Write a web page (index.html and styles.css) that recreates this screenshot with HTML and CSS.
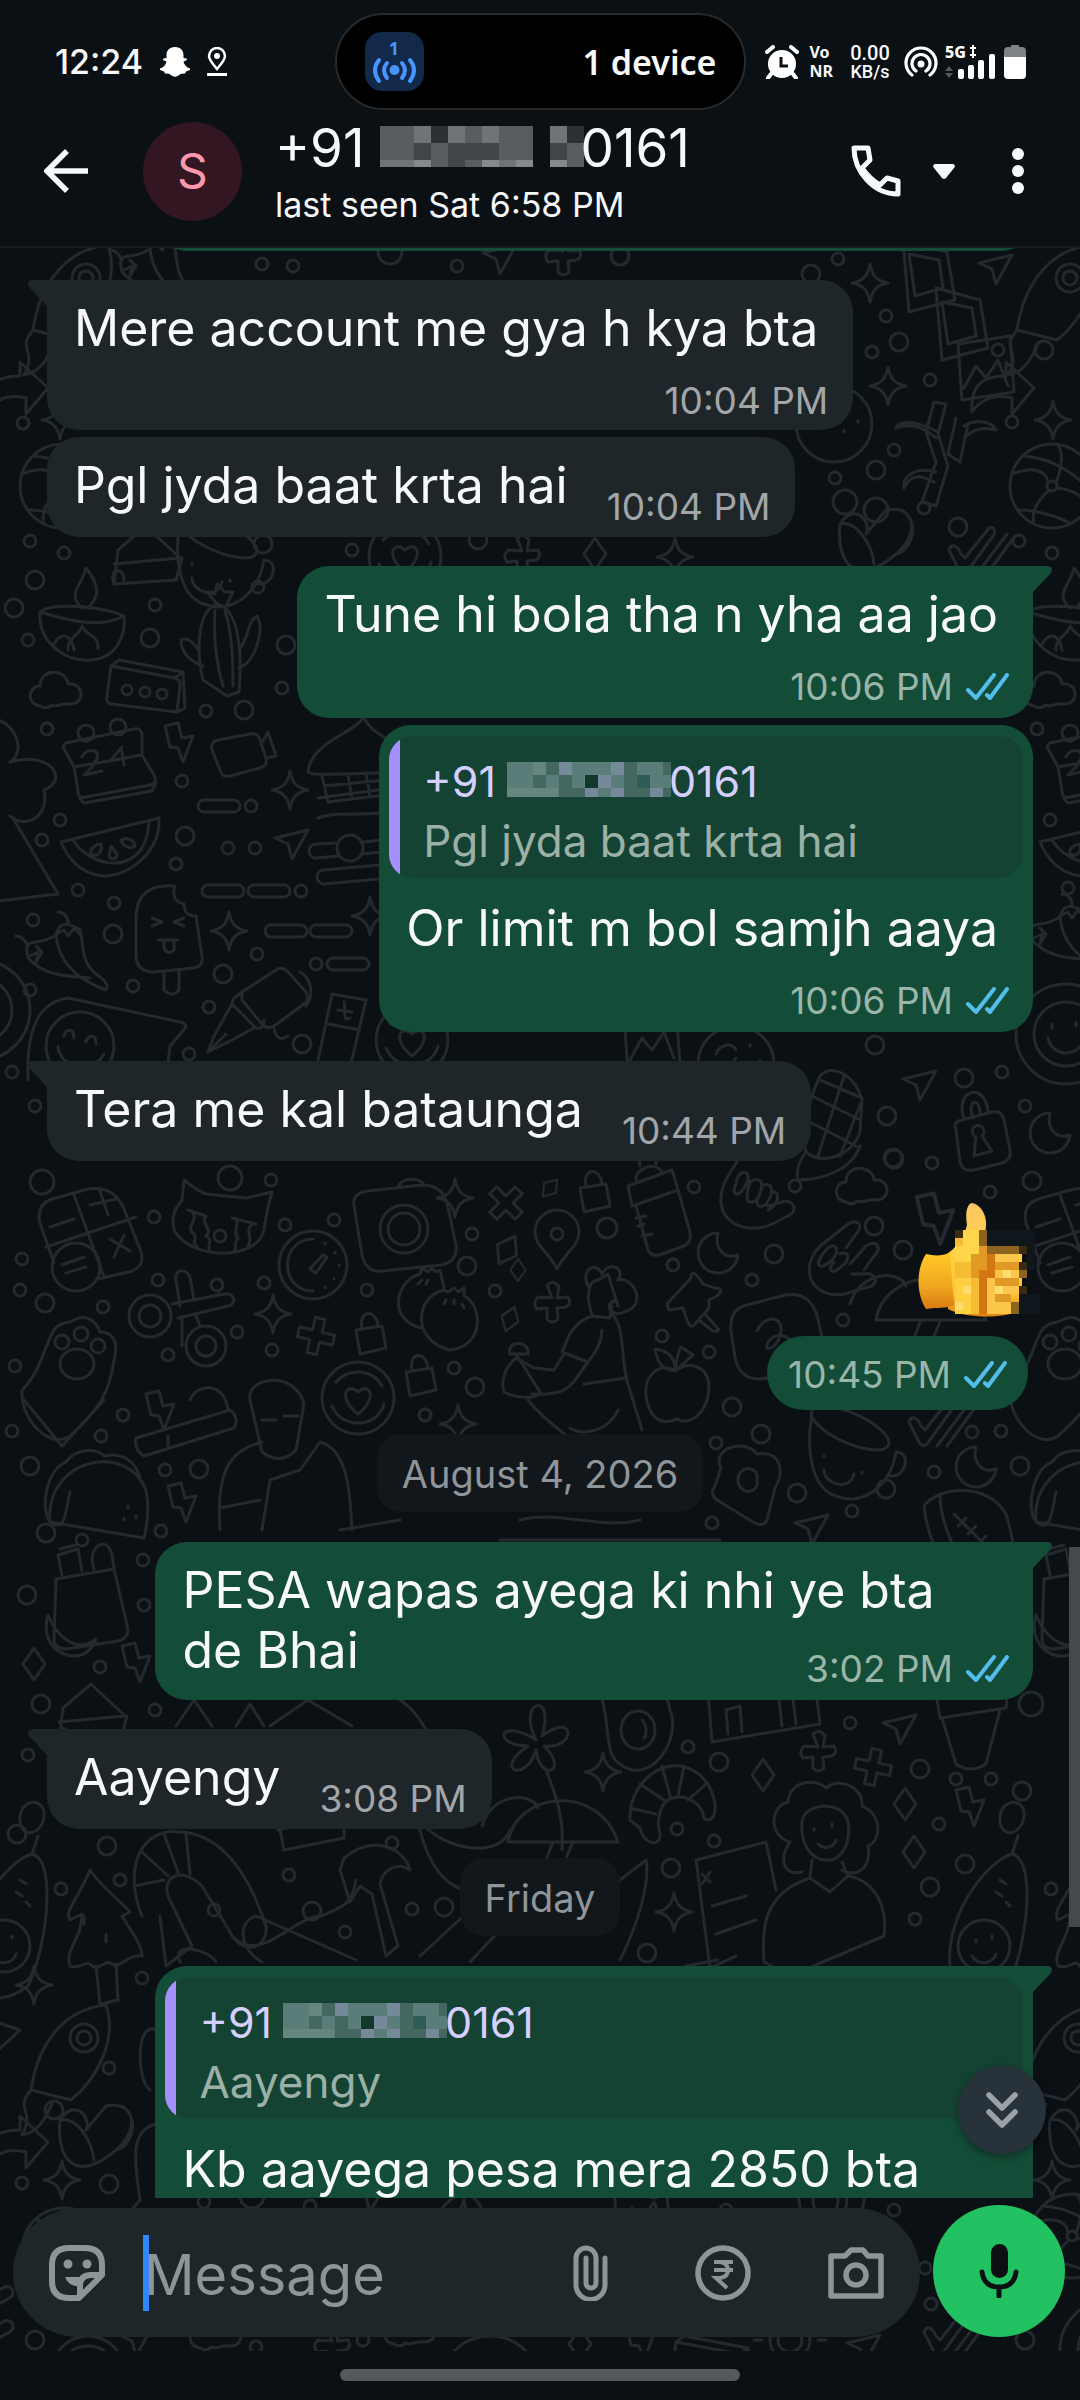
FILE: index.html
```
<!DOCTYPE html>
<html lang="en">
<head>
<meta charset="utf-8">
<meta name="viewport" content="width=device-width, initial-scale=1">
<title>Chat</title>
<link rel="stylesheet" href="styles.css">
</head>
<body>
<svg class="defs" aria-hidden="true">
  <defs>
    <symbol id="ticks" viewBox="0 0 43 28"><path d="M2 17 10 25 28 2M21 22 24 25 41 2" fill="none" stroke="#53bdeb" stroke-width="4" stroke-linecap="round" stroke-linejoin="round"/></symbol>
    <symbol id="mask" viewBox="0 0 164 35">
      <path fill="#5b7d7a" d="M0 0h164v35H0z"/>
      <path fill="#65857f" d="M0 26h51v9H0zM26 0h13v13H26zM77 13h13v13H77z"/>
      <path fill="#75899a" d="M52 0h13v13H52zM104 0h13v13h-13zM91 13h13v13H91zM78 26h13v9H78zM104 26h13v9h-13zM143 26h13v9h-13z"/>
      <path fill="#44685f" d="M39 0h13v13H39zM26 13h13v13H26zM52 13h13v13H52zM117 0h13v13h-13zM117 13h13v13h-13zM52 26h26v9H52zM117 26h26v9h-26zM156 0h8v13h-8zM156 26h8v9h-8z"/>
      <path fill="#2f5d53" d="M130 13h13v13h-13z"/>
      <path fill="#11382d" d="M78 13h13v13H78z"/>
    </symbol>
    <circle id="c1" r="6"/><circle id="c2" r="9"/><circle id="c3" r="12"/>
    <path id="star" d="M0-19C2-7 7-2 18 0 7 2 2 7 0 19-2 7-7 2-18 0-7-2-2-7 0-19z"/>
    <path id="bolt" d="M-14-16-1-19 3-4 14-6 4 20-1 6-9 5z"/>
    <path id="plane" d="M-17-5 16-13 0 16-4 1z"/>
    <path id="dash" d="M-15-6h30a6 6 0 0 1 0 12h-30a6 6 0 0 1 0-12z"/>
    <path id="moon" d="M0-19A20 20 0 1 0 20 3C6 8-4-4 0-19z"/>
    <path id="cross" d="M-5-18h10v13h13v10H5v13H-5V5h-13V-5h13z" stroke-linejoin="round"/>
    <path id="cloud" d="M-16 14C-30 12-28-6-16-6-16-24 10-24 12-8 28-10 30 12 14 12 6 10 2 16-4 13-8 16-12 17-16 14z"/>
    <path id="gem" d="M0-16 11 0 0 16-11 0z"/>
    <g id="lock"><path d="M-14-6 12-10 16 12-10 18zM-8-8C-12-26 6-28 8-10"/></g>
    <g id="padlock"><path d="M-24-10Q-28-18-18-20L12-28Q22-30 24-20L30 10Q32 20 22 23L-6 30Q-18 32-20 22zM-16-21C-26-52 6-58 8-28M-7-22C-14-40 0-44 0-26"/><path d="M2-4a6 6 0 1 0-6 1L-6 16 12 11z"/></g>
    <g id="pin"><path d="M0 29C-9 11-22 6-22-8a22 22 0 0 1 44 0C22 6 9 11 0 29z"/><circle cy="-6" r="6"/></g>
    <g id="rocket"><path d="M-45 30C-40-5-20-50 30-55 42-20 20 20-5 40zM-45 30C-62 50-40 50-54 75-36 72-30 56-24 44"/><circle cx="8" cy="-22" r="14"/><circle cx="8" cy="-22" r="7"/></g>
    <g id="globe"><circle r="42"/><circle r="5"/><path d="M-40-12C-20-20-6-16-4-4M4-3C14-30 8-40 4-42M5 2C26 4 36 16 38 20M-3 4C-20 20-20 30-18 38M-28-30C0-28 30-10 40 10M-34 24C-10 24 14 34 18 38"/></g>
    <g id="photo"><path d="M-22-30 22-18 30 30-16 42zM-16-16 14-10 18 18-10 26z"/></g>
    <g id="scene"><path d="M-26-24 26-32 30 24-22 32zM-20 20-8-2 2 10 14-8 24 18"/><circle cx="14" cy="-18" r="6"/></g>
    <path id="arrow" d="M-28 26C-30-4-14-10 6-10V-24L34 2 12 28V12C-4 8-18 12-28 26z"/>
    <g id="bamboo"><path d="M-8-60-16-30-6 0-20 40-6 44 6 4-4-28 4-58zM14-44 6-8 18 0 26-38M-4-30C-30-44-44-40-46-34-30-40-18-34-6-24M22-36C36-44 50-40 54-32 40-36 32-32 24-26M-6 10C-28 4-40 16-38 26-30 10-20 14-8 20"/></g>
    <g id="diya"><path d="M-42-8C-44 20-20 42 10 40 34 38 44 16 42-4 20-14-30-18-42-8zM-42-8C-10 2 20 8 42-4M0-12C-16-26 0-34 4-52 18-34 18-24 6-12M-14 30C-14 16-4 18 0 6 6 18 16 14 16 28M-28 24C-20 10-10 16-8 30"/></g>
    <g id="cactus"><path d="M-18 34C-26 0-22-36-4-42 16-38 22 0 18 46L6 50zM-18 20C-34 14-40 4-40-6-32-10-28-2-22 4M18 4C28-8 26-24 36-30 44-16 34 16 18 22M-4-42-14-54-6-52-4-62 4-54 12-54 6-42M-6-36C-8-4-4 20 2 40M4-36C12-8 12 20 12 40"/></g>
    <g id="box"><path d="M-34-20 30-8Q36-6 35 0L32 26-34 18Q-40 16-38 10zM-34-20-26-26 38-14 30-8M38-14 40 22 32 26"/><circle cx="-18" cy="4" r="5"/><circle cy="6" r="5"/><circle cx="17" cy="8" r="5"/></g>
    <g id="calendar"><path d="M-44-22Q-48-20-46-16L-36 2-32 26Q-32 34-24 32L40 20Q48 18 44 10L32-10 32-28Q32-38 24-36zM-36 2 32-10M-30 34-26 38 42 26 46 18"/><circle cx="-24" cy="-32" r="8"/><circle cx="8" cy="-38" r="8"/><path d="M-28-8Q-24-16-16-14T-18 2L-26 10-8 6M12-18 0-4 20-8M12-14 14 0"/></g>
    <g id="melon"><path d="M-50-8 48-32C50 0 20 26-8 26-34 24-46 2-50-8zM-38-10C-24 12 6 20 24 6 34-2 38-18 38-29"/><path d="M-20 4C-22-2-14-6-10-6-8 2-14 8-20 4zM-2 6-0-4 6 4C6 10 0 10-2 6zM10-10C18-14 24-8 24-4 18 0 12-4 10-10z"/></g>
    <g id="pop"><path d="M5-50C-20-52-34-42-34-18V22Q-32 36-16 36L24 32Q34 30 32 20L26-20C16-20 14-26 14-32 4-34 2-42 5-50zM-6 36V54Q2 62 9 54V34M-18-18-8-14-18-10M14-18 4-14 14-10M-12 4H8M-6 4V12Q-2 20 4 14V4"/></g>
    <g id="chili"><path d="M-10-14C-8 14 12 32 40 42 44 36 36 30 30 26 14 14 18-6 14-18-4-30-8-20-10-14zM-12-12C-30 0-44-14-38 10-22 28 0 28 24 30M2-24C2-32-2-36-8-36M-38-2C-42-10-46-12-50-12M-10-14-2-18 2-12 8-20 14-14M-36 8-28 4-30 14-24 4-30-2"/></g>
    <g id="video"><path d="M-32-10Q-34-18-26-20L6-26Q14-28 16-20L22-2Q24 6 16 8L-14 16Q-22 18-24 10zM17-16 24-28 32-4 22-2"/></g>
    <g id="hut"><path d="M-50 20C-48-10 0-20 6-36 10-14 60-6 62 20-30 22-46 24-50 20zM-36 24-30 50 50 40 46 22M-40 46 50 34M-10 24-6 46M8 22 12 44M-34 34 48 26M-40 66C-20 58 10 66 40 58"/></g>
    <g id="slider"><path d="M-14-7-34-6a7 7 0 0 0 0 14l22-2M14-8 48-12M12 4 50 0M-26 20 40 14M-26 34 40 28M-26 20a7 7 0 0 0 0 14"/><circle cy="-2" r="13"/></g>
    <g id="marker"><path d="M-10-14 24-36Q30-40 36-34L54-14Q58-6 52-2L22 20Q14 24 10 18L-10-6zM-10-14-18-8Q-22-2-16 2L4 22Q12 24 12 14M-20-2-38 30-44 46-20 34 2 22M-44 46-26 28M48-34C60-28 62-10 54 0M22 22C24 34 30 34 36 30"/></g>
    <g id="tile"><path d="M-10-36 24-30 6 46-26 40zM-14-6 18 0M2-28C4-18 0-8 8-12M-4-20 10-18"/></g>
    <g id="bag"><path d="M-72 40C-74-10-62-38-32-42L80-18Q90-16 82-8L70 6 66 40"/><circle cx="-20" cy="6" r="34"/><path d="M-42 6C-42 26-8 36 4 14M-36-4C-34-12-26-12-26-2M-14 2C-12-6-4-6-4 4"/></g>
    <g id="calc"><path d="M-50-12Q-54-30-38-36L-2-46Q24-50 34-26L50 14Q58 34 34 38L8 44M-50-12-36 28M-16-40 14 42M-44 12 46-18M-40-8-16-16M0-30 26-36M10-44 18-20M20 4 40 16M34 0 24 22"/><circle cx="-14" cy="32" r="24"/><path d="M-28 30-6 22M-24 38-4 32"/></g>
    <g id="cat"><path d="M-36-46C-26-38-20-34-14-32L26-28 52-34C46-14 46-8 44 4 38 34-28 36-46 4-50-16-40-22-38-26zM-32-16-14-10M-28-14C-20-6-36 0-26 8-22 16-30 14-22 22M-14-10C-20-2-6 4-14 10-6 14-14 18-10 26M12-8 36-2M16-8C20 0 12 6 18 12 12 18 18 20 14 26M32-2C24 6 34 12 28 20"/><circle cy="10" r="6"/></g>
    <g id="timer"><circle r="34"/><path d="M0-26C-34-26-34 26 0 26M-3 4 10-10 14-8 3 8zM12-22v1M22-13v1M26 0v1M21 13v1M12 22v1"/></g>
    <g id="camera"><path d="M-44-30Q-46-42-30-44L24-50Q46-50 50-28L58 10Q60 26 44 30L-16 36Q-32 38-36 20zM0-48C4-58 22-58 26-50"/><circle cx="6" cy="-6" r="24"/><circle cx="6" cy="-6" r="16"/></g>
    <g id="scissors"><path d="M-4-40C-6-52 8-52 10-42L14-20M-4-40 0-14M-2-2 48-14C58-16 54-28 44-26L-8-16M2-2 2 26M16-4 20 6"/><circle cx="-30" cy="-4" r="21"/><circle cx="-30" cy="-4" r="11"/><circle cx="26" cy="26" r="20"/><circle cx="26" cy="26" r="10"/></g>
    <g id="paw"><path d="M-48 30C-28 10-26-14-16-30-8-40 0-36 4-40 20-48 28-34 30-28 46-28 48-14 44 0 40 30 30 50 0 76-20 90-50 60-48 30z"/><circle cx="-8" cy="-18" r="7"/><circle cx="11" cy="-26" r="7"/><circle cx="28" cy="-14" r="7"/><ellipse cx="7" cy="4" rx="17" ry="15"/></g>
    <g id="disk"><circle r="36"/><path d="M-22-16C-10-30 14-30 24-12M-26 8C-16 32 20 30 26 6M0 16C-22-2-10-16 0-6 10-16 22-2 0 16z"/></g>
    <g id="bottle"><path d="M-30-20 14-36 20-16-26 0zM-22-26C-24-36-4-46 4-34M-18-40C-22-58 0-58-2-42M-22 0-10 44Q-6 52 4 48L26 40Q34 36 32 26L20-16M-22 12-12 10M-20 20-14 18M-16 30-6 28"/></g>
    <g id="shaka"><path d="M20-56 0-24C-20 10 4 36 40 26L60 16C72 10 64-2 54 2L40 6M8-16C10-32 22-30 20-20 12 0 2-4 8-16zM22-18C34-26 38-14 28 0 20 6 16 0 22-18M34-14C46-20 46-6 38 4 30 10 26 4 32-6M44-8C52-10 52 4 40 10"/></g>
    <g id="horn"><path d="M18-36C28-42 34-34 26-26L16-12M18-36-10-14C-34 12-14 40 14 34L42 26C50 20 42 12 34 14L22 14M-4-10C4-20 12-10 2 0-10 12-18 6-4-10zM10-6C20-10 20 0 12 6 2 16-4 10 4 2M20 4 36-14C48-22 52-10 44-4L34 10"/></g>
    <g id="tack"><path d="M-28 4-4-22C-4-34 6-20 8-16L20-12Q30-12 22-4L14 0 14 8 0 24Q-4 30-8 20L-12 8-26 10zM10 14 24 30Q20 34 14 28L4 20"/></g>
    <g id="buns"><path d="M-16-26C-40-20-50 20-14 28M-16-26-14-32-8-28-4-32 0-28 4-30 8-12M-18-16-14-20M-10-16-8-20"/><path d="M8-10C-20-4-26 40 14 50 50 46 46 4 28-4L28-12 22-8 18-12 12-8zM8 4 10 0M18 4 18 0M28 8 26 4"/></g>
    <g id="aster"><path d="M0-5-5-18Q2-24 7-16L5-5 16-6Q20 0 14 4L5 5 6 16Q0 22-5 16L-5 5-15 6Q-20 0-14-6z"/></g>
    <g id="girl"><path d="M-2-40C-14-38-10-24-12-22L-8-4 10-2 12-14M-12-34C-20-50-4-60 2-46 8-60 26-52 18-40 34-44 48-14 24-8 12-2 2-16 16-20M-2-40 8-46 18-14M-8-4C-32 4-34 26-38 32L-12 42C-2 30 2 20 2 10M-36 34-46 50-66 48M12-6C26 8 20 40 28 64L42 110M-12 42C-30 66-30 76-68 74M-66 48-84 38C-94 46-100 60-96 72-80 80-60 78-60 72L-84 34M-90 34C-94 20-70 20-72 34zM26 58-16 64M18 90C8 112-18 116-30 108M-72 80C-56 100-40 110-30 118"/></g>
    <g id="apple"><path d="M0-14C-14-24-34-10-28 16-22 40-8 38 2 34 14 42 34 28 34 0 32-20 14-24 0-14zM0-14C-16-16-18-26-20-36-6-34 0-28 0-14 2-26 2-32 6-38L18-30Z"/></g>
    <g id="die"><path d="M-44-6Q-46-28-28-32L10-42Q34-46 42-22L50 14Q52 34 32 36L-16 42Q-36 42-40 20zM-18-6C-10-24 8-20 6-6 4 10-10 16-8 8-4-4 10-4 16 4"/></g>
    <g id="cup"><path d="M-34-38C-40-6-36 36-10 44 16 54 44 36 50 0M50 0C66 0 60 26 44 24M-22 4v1M16 20v1M-22 18C-22 32 4 40 8 22"/><ellipse cx="4" cy="-24" rx="42" ry="15" transform="rotate(24 4 -24)"/></g>
    <g id="check"><path d="M-26-2C-24-8-18-8-14 2L-10 6 14-24C18-26 22-22 18-16L-8 20Q-12 24-16 18zM2 22 32-18M12 22 40-16"/></g>
    <g id="taco"><path d="M-46 22C-52-40 30-60 50-10 54 10 50 30 48 38zM-46 22C-56 8-50-30-30-38-20-52 0-52 8-44 24-48 40-40 44-22M-46 22C-30 34-30 8-26-8M32 6v2M40 16v2M28 18v2"/></g>
    <g id="ball"><path d="M-42-18C-30-36 20-44 40-10 46 10 48 24 50 36M-42-18C-40 4-32 24-22 40M-26-30C-26-4-14 20-4 40M-12-10 20 22M-8 2 0-6M2 10 10 2M12 20 20 12"/></g>
    <g id="toast"><path d="M-24-14C-34-34 0-44 12-28 36-32 40-10 30 6L22 38Q18 46 8 40L-28 18Q-36 12-30 4zM12-8C2-22-14-6-4 6 4 14 14 6 12 0z"/></g>
    <g id="tote"><path d="M-30-16 28-26 42 34Q42 44 32 46L-20 54Q-32 54-32 44zM-24-20-28-40-8-46-4-24M-26-46-10-50M8-26C0-50 22-60 26-40L28-26M-38 20C-50 60 0 76 10 44-10 60-30 40-38 20z"/></g>
    <g id="note"><path d="M-32-10-4-34 30-2-36 4M-32-10-36 24 26 20 32-2M-36 24C-42 8-26 6-26 20"/></g>
    <g id="flower"><path d="M0 0C-20-40 20-50 6-4 40-30 40 10 8 6 34 30 4 44 0 10-10 44-44 30-8 6-44 6-38-24 0 0zM10 30C22 60 28 80 26 110"/></g>
    <g id="egg"><path d="M-34-38C-30-66 30-60 36-20 46 4 26 44-2 40-36 30-20 2-34-38z"/><ellipse cx="4" cy="0" rx="17" ry="19"/><path d="M8-10C14-4 12 6 10 8"/></g>
    <g id="house"><path d="M-56-40-50 36 58 18 50-50M-34 28-36 4-22 0-20 26M20 20 16-14 30-16 34 18M-40-36-40-22-30-24-30-38M-16-40-16-26-4-28-6-42M12-44 12-30 26-32 24-46"/></g>
    <g id="pot"><path d="M-34-30 38-40 36-16-30-6zM-28-6-14 40Q0 50 16 40L30-14M-30-30C-30-46 20-54 34-40"/></g>
    <g id="croissant"><path d="M-38 20C-40-24 10-56 40-16 54 10 44 26 36 18 34 4 20-6 4-2-8 2-12 20-8 34-8 50-26 42-28 28zM-38 8-12 14M-28-16-4 0M-6-34 2-4M16-34 10-4M38-16 20 0"/></g>
    <g id="parasol"><path d="M-54 20C-46-30 36-40 56 20zM-10 22-24 60M-80 4C-70-30-30-30-24-14M10 22-6 60"/></g>
    <g id="bloom"><path d="M-34 6C-56 0-54-30-36-34-34-56-8-58 2-48 16-60 40-48 38-30 58-22 58 4 44 10 48 34 30 42 18 34M-34 6C-46 24-40 40-22 36M-22-14C-20-34 20-36 24-14 28 14 12 26 2 24-14 24-24 6-22-14zM-10-8v2M8-12v2M-6 8C0 14 10 12 12 4M-12 24-14 42 6 56 24 40 18 26M-14 42C-70 60-60 110-60 126L-34 140 60 100C64 70 50 44 24 40"/></g>
    <g id="map"><path d="M-30-30 40-48M-30-30-16 78 10 66M40-48 50 0M-24-16-16-8M-16-18-24-6M-14 16 20 6M-10 44 30 30M-40 76-8 70"/></g>
    <g id="avocado"><path d="M-36 60C-50 0 0-60 24-66 50-60 38 30 20 66-4 84-28 82-36 60z"/><circle cx="-4" cy="26" r="26"/><path d="M-16 36C-8 48 6 42 8 34M-12 20v2M4 16v2M8-28 14-24M12-40 18-36M18-18 22-14M24-66 30-84M34-96C44-120 16-126 12-104 10-88 24-80 34-96z"/></g>
    <g id="tree"><path d="M-16-50C-28-20-42-10-36 0L-24-6C-24 20-42 30-36 46-24 50-20 38-14 46-8 52 0 38 6 44 14 50 20 34 36 36 36 24 24 10 16-4L24-8C14-20-2-30-16-50zM-10 46-6 84 12 80 10 44M-22-4v8M0 14v8"/></g>
    <g id="shrimp"><path d="M-30 40C-50-10-30-50 10-44 60-40 84 20 94 50 96 74 70 80 58 56L30 10C10-10-10 0-4 20L20 70-6 90-12 40M-38 10-8 4M-30-24-4 0M-8-42 6-4M14-42 18-2M60 60C90 90 120 40 150 40 170 30 180 30 184 4"/></g>
    <g id="hammer"><path d="M-30-32C0-56 30-42 36-20 22-30 8-18 6-6L24 56 12 66-2 4-14-4-24 12-34-20z"/></g>
    <g id="mic-heart"><path d="M-26-20C-10-44 6-20 0-10L20-34C50-40 54-10 30 10-10 44-30 20-26-20zM-26-20C-10-24 6 0 8 20M36-34C56-20 44 8 30 10"/></g>
    <g id="smile"><circle r="50"/><circle r="32"/><path d="M-18 4C-14 24 14 24 18 4M-14-10v4M10-12v4"/></g>
    <g id="pine"><path d="M-12-20C-26 10-30 40-26 56-10 70 20 60 28 36L30 4C24-20 0-34-12-20zM-26 24 24 50M-20 0 28 24M-12-16 30 2M-14 60 12-20M8 60 30 4M-26 56C-34 66-36 74-34 84-10 84 20 74 28 50"/></g>
    <g id="cookie"><circle r="38"/><path d="M-20-10C-16-20-4-22 0-14M-24 0C-20 8-6 4 0-6M14-20v2M24-4v2M10 6v2"/></g>
    <g id="sun"><circle r="12"/><circle r="20"/><path d="M-36 0h8M28 0h8M-26-22l6 6M20-16l6-6M0-36v8"/></g>
  </defs>
</svg>

<div class="phone">
  <div class="status">
    <div class="status-left">
      <time>12:24</time>
      <svg width="30" height="30" viewBox="0 0 30 30" fill="#fff"><path d="M15 0c6 0 8.500 4 8.500 8v3l3 .5c.8.500.5 1.500-.5 2l-2.500 1c.5 3 3 6 6.500 7v1.500l-4 1.500-1 2-4 .2c-2 1.500-4 3-6 3s-4-1.500-6-3L5 26.500l-1-2L0 23v-1.500c3.500-1 6-4 6.500-7l-2.500-1c-1-.5-1.300-1.500-.5-2l3-.5V8c0-4 2.500-8 8.500-8z"/></svg>
      <svg width="20" height="30" viewBox="0 0 20 30"><path d="M10 22C6 17 2 13 2 9a8 8 0 0 1 16 0c0 4-4 8-8 13z" fill="none" stroke="#fff" stroke-width="2.500"/><circle cx="10" cy="9" r="3" fill="#fff"/><path d="M0 26h20v3H0z" fill="#fff"/></svg>
    </div>
    <div class="island">
      <svg width="59" height="59" viewBox="0 0 59 59"><rect width="59" height="59" rx="17" fill="#12294a"/><text x="29" y="23" text-anchor="middle" class="island-count">1</text><circle cx="29.500" cy="38" r="5" fill="#4795ff"/><g fill="none" stroke="#4795ff" stroke-width="4" stroke-linecap="round"><path d="M22 31q-6 7 0 15M37 31q6 7 0 15M14 28q-8 10 0 21M45 28q8 10 0 21"/></g></svg>
      <span>1 device</span>
    </div>
    <div class="status-right">
      <svg width="34" height="34" viewBox="0 0 34 34"><circle cx="17" cy="19" r="14" fill="#fff"/><path d="M2 7 8 2M26 2l6 5M6 29l-3 4M28 29l3 4" stroke="#fff" stroke-width="4" stroke-linecap="round"/><path d="M16 12v9h7" fill="none" stroke="#0b1014" stroke-width="3"/></svg>
      <span class="vonr">Vo<br>NR</span>
      <span class="rate">0.00<small>KB/s</small></span>
      <svg width="34" height="34" viewBox="0 0 34 34"><circle cx="17" cy="19" r="3.500" fill="#fff"/><g fill="none" stroke="#fff" stroke-width="3.200" stroke-linecap="round"><path d="M12 26a9 9 0 1 1 10 0M8 30a15 15 0 1 1 18 0"/></g></svg>
      <svg width="52" height="50" viewBox="0 -8 52 50"><text x="0" y="13" class="net">5G</text><path d="M28 0v13M25 3h6M25 10h6" stroke="#fff" stroke-width="2"/><g fill="#fff"><rect x="13" y="24" width="6" height="10" rx="2"/><rect x="23" y="20" width="6" height="14" rx="2"/><rect x="33" y="15" width="6" height="19" rx="2"/><rect x="44" y="9" width="6" height="25" rx="2"/></g><path d="M0 26l4-5 4 5zM0 28l4 5 4-5z" fill="#55595c"/></svg>
      <svg width="22" height="34" viewBox="0 0 22 34"><path d="M7 0h8v2h3q4 0 4 4v7H0V6q0-4 4-4h3z" fill="#808386"/><path d="M0 12h22v18q0 4-4 4H4q-4 0-4-4z" fill="#fff"/></svg>
    </div>
  </div>

  <header class="bar">
    <button class="icon-btn back" aria-label="Back"><svg width="44" height="44" viewBox="0 0 44 44"><path d="M23 2 3 22l20 20M3 22h41" fill="none" stroke="#f7f8fa" stroke-width="5.500"/></svg></button>
    <span class="avatar">S</span>
    <div class="who">
      <h1>+91<svg width="204" height="41" viewBox="0 0 204 41">
        <path fill="#595c60" d="M0 0h153v41H0zM170 0h34v41h-34z"/>
        <path fill="#707377" d="M34 0h17v17H34zM68 0h17v17H68zM102 0h17v17h-17zM170 0h17v17h-17zM0 34h34v7H0zM119 34h17v7h-17z"/>
        <path fill="#414549" d="M34 17h17v17H34zM68 17h51v17H68zM68 34h17v7H68zM170 17h17v17h-17z"/>
        <path fill="#2b3035" d="M51 0h17v17H51zM187 0h17v17h-17z"/>
        <path fill="#85898c" d="M34 34h17v7H34zM102 34h17v7h-17zM136 34h17v7h-17zM170 34h17v7h-17z"/>
      </svg>0161</h1>
      <p>last seen Sat 6:58 PM</p>
    </div>
    <button class="icon-btn call" aria-label="Call"><svg width="50" height="52" viewBox="0 0 50 52"><path d="M3 3h14l2 12-8 8C17 32 22 36 29 40l7-7 11 3v13C22 49 3 26 3 3z" fill="none" stroke="#f7f8fa" stroke-width="5" stroke-linejoin="round"/></svg>
    <svg width="22" height="15" viewBox="0 0 22 15"><path d="M2 0h18q3 1 1 4L13 14q-2 2-4 0L1 4q-2-3 1-4z" fill="#f7f8fa"/></svg></button>
    <button class="icon-btn" aria-label="More options"><svg width="12" height="46" viewBox="0 0 12 46" fill="#f7f8fa"><circle cx="6" cy="6" r="6"/><circle cx="6" cy="23" r="6"/><circle cx="6" cy="40" r="6"/></svg></button>
  </header>

  <main class="chat">
    <svg class="wallpaper" viewBox="0 248 1080 2103" preserveAspectRatio="xMidYMin slice" aria-hidden="true">
      <use href="#rocket" x="78" y="300"/><use href="#rocket" x="1062" y="300"/><use href="#photo" x="925" y="270"/><use href="#photo" x="958" y="318"/><use href="#scene" x="984" y="368"/><use href="#star" x="870" y="283"/><use href="#star" x="888" y="386"/><use href="#plane" x="996" y="268"/><use href="#arrow" x="1000" y="386"/><use href="#arrow" x="14" y="386"/>
      <use href="#bamboo" x="942" y="462"/><use href="#globe" x="1052" y="486"/><use href="#globe" x="62" y="486"/><use href="#star" x="1053" y="420"/><use href="#star" x="60" y="420"/><use href="#cookie" x="834" y="424"/><use href="#mic-heart" x="866" y="544"/><use href="#c3" x="845" y="502"/><use href="#c3" x="876" y="510"/><use href="#star" x="675" y="557"/><use href="#disk" x="405" y="556"/><use href="#c1" x="352" y="550"/><use href="#c2" x="478" y="540"/><use href="#aster" x="522" y="556"/><use href="#gem" x="595" y="554"/><use href="#check" x="975" y="552"/>
      <use href="#c3" x="390" y="252"/><use href="#plane" x="500" y="258"/><use href="#aster" x="563" y="256"/><use href="#c2" x="620" y="256"/><use href="#c1" x="457" y="266"/><use href="#c1" x="262" y="264"/><use href="#c1" x="293" y="266"/><use href="#chili" x="160" y="262"/><use href="#c1" x="838" y="259"/><use href="#c2" x="811" y="274"/><use href="#c1" x="886" y="316"/><use href="#c1" x="872" y="352"/><use href="#c2" x="899" y="342"/><use href="#c1" x="930" y="380"/><use href="#c2" x="1044" y="350"/><use href="#c1" x="1012" y="422"/><use href="#c1" x="894" y="450"/><use href="#c2" x="876" y="470"/><use href="#c1" x="835" y="478"/><use href="#c1" x="924" y="508"/><use href="#c2" x="958" y="527"/><use href="#c1" x="1019" y="541"/><use href="#c1" x="1052" y="553"/><use href="#c1" x="23" y="423"/>
      <use href="#diya" x="82" y="620"/><use href="#diya" x="1070" y="620"/><use href="#cactus" x="221" y="646"/><use href="#box" x="145" y="686"/><use href="#cloud" x="56" y="692"/><use href="#cloud" x="1050" y="692"/><use href="#cup" x="214" y="560"/><use href="#note" x="150" y="560"/><use href="#c1" x="30" y="541"/><use href="#c1" x="64" y="553"/><use href="#c2" x="35" y="580"/><use href="#c2" x="14" y="608"/><use href="#c1" x="155" y="605"/><use href="#c2" x="150" y="638"/><use href="#c1" x="28" y="640"/><use href="#c2" x="263" y="544"/><use href="#c1" x="258" y="587"/><use href="#c2" x="286" y="645"/><use href="#c1" x="282" y="688"/><use href="#c1" x="206" y="711"/><use href="#c2" x="244" y="710"/>
      <use href="#calendar" x="110" y="765"/><use href="#bolt" x="179" y="742"/><use href="#video" x="244" y="760"/><use href="#star" x="290" y="790"/><use href="#dash" x="219" y="806"/><use href="#c1" x="251" y="806"/><use href="#plane" x="292" y="843"/><use href="#melon" x="111" y="850"/><use href="#c2" x="185" y="836"/><use href="#c1" x="228" y="848"/><use href="#c1" x="255" y="848"/><use href="#hut" x="358" y="752"/><use href="#slider" x="350" y="850"/><use href="#pop" x="170" y="936"/><use href="#dash" x="223" y="891"/><use href="#dash" x="269" y="891"/><use href="#c1" x="301" y="891"/><use href="#star" x="229" y="931"/><use href="#dash" x="286" y="931"/><use href="#dash" x="331" y="931"/><use href="#c1" x="316" y="964"/><use href="#dash" x="348" y="964"/><use href="#star" x="370" y="916"/><use href="#chili" x="66" y="948"/><use href="#c2" x="113" y="934"/><use href="#c1" x="114" y="903"/><use href="#c1" x="78" y="890"/><use href="#c1" x="33" y="920"/><use href="#c1" x="30" y="990"/><use href="#c1" x="133" y="986"/><use href="#c2" x="223" y="974"/><use href="#c1" x="257" y="954"/><use href="#c1" x="209" y="1007"/><use href="#c1" x="189" y="1054"/><use href="#c2" x="302" y="1044"/>
      <use href="#c1" x="47" y="729"/><use href="#c1" x="60" y="820"/><use href="#c1" x="42" y="840"/><use href="#c1" x="182" y="781"/><use href="#c1" x="176" y="864"/><path d="M-20 720C10 710 30 750 10 762 50 750 70 780 44 790 50 816 26 830 10 816M14 820 58 894-10 902"/><use href="#marker" x="252" y="1006"/><use href="#tile" x="342" y="1030"/><use href="#bag" x="100" y="1040"/><use href="#smile" x="-20" y="1010"/><use href="#disk" x="412" y="1040"/><use href="#cookie" x="736" y="1064"/><use href="#scene" x="650" y="1040"/><use href="#c2" x="875" y="1045"/><use href="#plane" x="920" y="1084"/><use href="#pine" x="832" y="1096"/><use href="#padlock" x="980" y="1140"/><use href="#moon" x="1050" y="1132"/><use href="#smile" x="1066" y="1034"/><use href="#chili" x="1070" y="930"/><use href="#melon" x="1090" y="850"/><use href="#calendar" x="1094" y="765"/><use href="#c1" x="1050" y="820"/><use href="#c1" x="1068" y="888"/><use href="#c2" x="964" y="1078"/><use href="#c1" x="1002" y="1072"/><use href="#c2" x="887" y="1116"/><use href="#c2" x="893" y="1158"/><use href="#c1" x="932" y="1163"/><use href="#c1" x="1025" y="1106"/><use href="#c1" x="1037" y="729"/>
      <use href="#calc" x="90" y="1235"/><use href="#cat" x="220" y="1226"/><use href="#timer" x="313" y="1265"/><use href="#camera" x="398" y="1235"/><use href="#scissors" x="180" y="1320"/><use href="#star" x="273" y="1314"/><use href="#cross" transform="translate(316 1336) rotate(14)"/><use href="#lock" x="370" y="1336"/><use href="#paw" x="70" y="1360"/><use href="#disk" x="358" y="1398"/><use href="#c3" x="42" y="1182"/><use href="#c1" x="35" y="1106"/><use href="#c1" x="12" y="1072"/><use href="#c3" x="230" y="1178"/><use href="#c1" x="271" y="1180"/><use href="#c1" x="154" y="1217"/><use href="#c1" x="285" y="1225"/><use href="#c1" x="334" y="1220"/><use href="#c1" x="158" y="1280"/><use href="#c1" x="217" y="1285"/><use href="#c1" x="264" y="1283"/><use href="#c2" x="45" y="1303"/><use href="#c1" x="103" y="1307"/><use href="#c1" x="237" y="1332"/><use href="#c1" x="272" y="1350"/><use href="#c1" x="168" y="1355"/><use href="#c1" x="22" y="1259"/><use href="#c1" x="20" y="1290"/><use href="#c1" x="15" y="1366"/><use href="#c1" x="367" y="1290"/>
      <use href="#star" x="455" y="1198"/><use href="#cross" transform="translate(506 1203) rotate(45)"/><use href="#gem" transform="translate(550 1188) rotate(40) scale(.7)"/><use href="#lock" x="594" y="1194"/><use href="#bottle" x="658" y="1206"/><use href="#pin" x="557" y="1240"/><circle cx="607" cy="1228" r="10"/><use href="#shaka" x="728" y="1200"/><use href="#moon" x="718" y="1252"/><use href="#cloud" x="862" y="1188"/><use href="#bolt" transform="translate(935 1218) scale(1.300)"/><use href="#horn" x="830" y="1260"/><use href="#tack" x="695" y="1300"/><use href="#buns" x="436" y="1300"/><use href="#aster" x="552" y="1303"/><use href="#girl" x="600" y="1320"/><use href="#apple" x="675" y="1385"/><use href="#die" x="775" y="1337"/><use href="#lock" x="420" y="1378"/><use href="#star" x="458" y="1424"/><use href="#gem" transform="translate(507 1250) rotate(30)"/><use href="#gem" transform="translate(518 1270) scale(.7)"/><use href="#gem" transform="translate(510 1319) rotate(20) scale(.8)"/><use href="#c2" x="467" y="1266"/><use href="#c1" x="472" y="1234"/><use href="#c1" x="495" y="1291"/><use href="#c1" x="454" y="1368"/><use href="#c2" x="475" y="1387"/><use href="#c1" x="425" y="1415"/><use href="#c2" x="774" y="1254"/><use href="#c1" x="673" y="1265"/><use href="#c1" x="752" y="1280"/><use href="#c1" x="694" y="1187"/><use href="#c1" x="795" y="1186"/><use href="#c2" x="894" y="1159"/><use href="#c2" x="874" y="1226"/><use href="#c2" x="903" y="1250"/><use href="#c1" x="662" y="1336"/><use href="#c1" x="709" y="1352"/><use href="#c1" x="843" y="1320"/><use href="#c2" x="732" y="1407"/><use href="#c2" x="761" y="1434"/><use href="#c1" x="716" y="1443"/>
      <use href="#parasol" x="930" y="1300"/><use href="#c2" x="1032" y="1181"/><use href="#c1" x="990" y="1192"/><use href="#calc" x="1076" y="1235"/><use href="#paw" x="1058" y="1360"/><use href="#cup" x="846" y="1452"/><use href="#check" x="935" y="1424"/><use href="#moon" x="976" y="1466"/><use href="#ball" x="966" y="1524"/><use href="#taco" x="96" y="1500"/><use href="#taco" x="1082" y="1500"/><use href="#bolt" x="182" y="1502"/><use href="#toast" x="745" y="1482"/><path d="M136 1438 230 1410Q240 1418 234 1428L144 1456Q134 1450 136 1438zM168 1446v-10M190 1400C196 1384 224 1380 228 1410M250 1400C246 1376 296 1370 304 1404L296 1450Q280 1466 262 1452zM262 1420h14M284 1416h14M220 1530C216 1470 230 1450 262 1442M262 1530 270 1480 300 1470 320 1442C350 1450 350 1500 352 1530M220 1508 260 1500M340 1530 400 1520"/><path d="M24 1400 62 1446 104 1400M520 1520C560 1510 600 1530 640 1520M500 1540h220"/>
      <use href="#bolt" x="160" y="1410"/><use href="#c1" x="12" y="1431"/><use href="#c1" x="123" y="1415"/><use href="#c1" x="101" y="1436"/><use href="#c2" x="30" y="1466"/><use href="#c1" x="165" y="1470"/><use href="#c2" x="199" y="1469"/><use href="#c2" x="46" y="1533"/><use href="#c1" x="82" y="1540"/><use href="#c1" x="161" y="1531"/><use href="#c1" x="425" y="1415"/><use href="#c1" x="972" y="1432"/><use href="#c1" x="1001" y="1431"/><use href="#c2" x="1020" y="1466"/><use href="#c1" x="934" y="1472"/><use href="#c2" x="797" y="1493"/><use href="#c2" x="886" y="1489"/><use href="#c1" x="852" y="1511"/><use href="#c1" x="712" y="1523"/><use href="#plane" x="812" y="1528"/>
      <use href="#tote" x="86" y="1595"/><use href="#tote" x="1074" y="1595"/><use href="#bolt" x="136" y="1662"/><use href="#note" x="95" y="1718"/><use href="#c1" x="143" y="1560"/><use href="#c2" x="27" y="1595"/><use href="#c1" x="144" y="1605"/><use href="#gem" x="34" y="1664"/><use href="#c1" x="100" y="1667"/><use href="#c1" x="155" y="1710"/><use href="#c2" x="41" y="1704"/><use href="#c1" x="28" y="1755"/><use href="#c3" x="1031" y="1704"/><use href="#flower" x="536" y="1740"/><use href="#egg" x="634" y="1730"/><use href="#house" x="762" y="1706"/><use href="#plane" x="900" y="1728"/><use href="#pot" x="970" y="1724"/><use href="#star" x="603" y="1772"/><use href="#croissant" x="668" y="1800"/><use href="#gem" x="763" y="1775"/><use href="#aster" x="818" y="1752"/><use href="#cross" transform="translate(873 1767) rotate(12)"/><use href="#bloom" x="824" y="1836"/><use href="#bolt" x="970" y="1806"/><use href="#parasol" x="562" y="1822"/><use href="#gem" x="905" y="1804"/><use href="#c1" x="850" y="1723"/><use href="#c1" x="688" y="1747"/><use href="#c2" x="719" y="1762"/><use href="#c2" x="920" y="1769"/><use href="#c1" x="956" y="1779"/><use href="#c1" x="991" y="1779"/><use href="#c2" x="1022" y="1791"/><use href="#c1" x="714" y="1841"/><use href="#c1" x="677" y="1829"/><use href="#c1" x="939" y="1824"/><use href="#gem" x="914" y="1852"/><path d="M176 1726 194 1700 212 1726M236 1726 250 1704 264 1726M270 1726 308 1700 352 1726M400 1700C430 1720 440 1760 436 1800"/>
      <use href="#avocado" x="988" y="1920"/><use href="#avocado" x="8" y="1920"/><use href="#tree" x="106" y="1920"/><use href="#tree" x="1094" y="1920"/><use href="#shrimp" x="172" y="1876"/><use href="#hammer" x="374" y="1890"/><use href="#map" x="726" y="1890"/><use href="#star" x="674" y="1912"/><use href="#star" x="34" y="1985"/><use href="#c2" x="107" y="1846"/><use href="#c2" x="17" y="1834"/><use href="#c1" x="61" y="1889"/><use href="#c1" x="120" y="1880"/><use href="#c1" x="214" y="1910"/><use href="#c1" x="289" y="1875"/><use href="#c2" x="312" y="1911"/><use href="#c1" x="345" y="1932"/><use href="#c1" x="412" y="1909"/><use href="#c2" x="444" y="1907"/><use href="#c1" x="392" y="1843"/><use href="#c2" x="671" y="1868"/><use href="#c2" x="647" y="1953"/><use href="#c2" x="930" y="1887"/><use href="#c1" x="915" y="1919"/><use href="#c2" x="965" y="1864"/><use href="#c1" x="1051" y="1889"/><use href="#c1" x="142" y="1978"/><path d="M278 1830 344 1816M280 1830 284 1850 344 1838V1816M356 1960 256 1916C236 1922 240 1950 262 1962M420 1956 470 1910 500 1930 470 1962M420 1830C430 1870 450 1890 470 1890M620 1960C640 1920 650 1880 646 1860L620 1880M420 1820C440 1850 500 1860 510 1830M180 1962C170 1940 210 1950 216 1962"/>
      <use href="#rocket" x="76" y="2060"/><use href="#rocket" x="1070" y="2060"/><use href="#c1" x="109" y="2068"/><use href="#c2" x="54" y="2110"/><use href="#mic-heart" x="86" y="2140"/><use href="#mic-heart" x="1076" y="2140"/><use href="#arrow" x="14" y="2140"/><use href="#star" x="62" y="2180"/><use href="#star" x="1052" y="2180"/><use href="#c2" x="109" y="2184"/><use href="#c1" x="22" y="2183"/><path d="M156 2030C136 2020 136 2080 150 2090M156 2124C130 2130 134 2160 140 2200L130 2212M-10 2020 20 2030-2 2050"/>
      <use href="#globe" x="64" y="2250"/><use href="#globe" x="1072" y="2236"/><use href="#c1" x="204" y="2202"/><use href="#c3" x="252" y="2196"/><use href="#c1" x="310" y="2206"/><use href="#flower" x="464" y="2190"/><use href="#plane" x="370" y="2196"/><use href="#c1" x="726" y="2210"/><use href="#scene" x="640" y="2210"/><use href="#egg" x="826" y="2200"/><use href="#c1" x="894" y="2210"/><use href="#c1" x="925" y="2268"/><use href="#c1" x="931" y="2304"/><use href="#dash" transform="translate(-6 2300) rotate(-30)"/><use href="#dash" transform="translate(-6 2334) rotate(-30)"/><use href="#c2" x="35" y="2340"/><use href="#disk" x="88" y="2372"/><use href="#plane" x="136" y="2340"/><use href="#cloud" x="216" y="2334"/><use href="#c1" x="256" y="2347"/><use href="#aster" x="332" y="2346"/><use href="#c1" x="363" y="2340"/><use href="#cloud" x="410" y="2330"/><use href="#smile" x="490" y="2386"/><use href="#sun" x="790" y="2340"/><use href="#box" x="710" y="2362"/><use href="#plane" x="864" y="2348"/><use href="#check" x="950" y="2334"/><use href="#c2" x="1025" y="2340"/><use href="#smile" x="1110" y="2350"/><use href="#gem" x="580" y="2344"/><use href="#bolt" x="640" y="2340"/>
    </svg>

    <section class="list" aria-label="Messages">
      <div class="msg out scrolled"></div>

      <div class="msg in tail first"><p>Mere account me gya h kya bta</p><div class="meta below">10:04 PM</div></div>
      <div class="msg in inline next"><p>Pgl jyda baat krta hai</p><div class="meta">10:04 PM</div></div>

      <div class="msg out tail first"><p>Tune hi bola tha n yha aa jao</p><div class="meta below">10:06 PM<svg class="ticks"><use href="#ticks"/></svg></div></div>
      <div class="msg out quoted next">
        <blockquote><cite>+91<svg class="mask"><use href="#mask"/></svg>0161</cite><span>Pgl jyda baat krta hai</span></blockquote>
        <p>Or limit m bol samjh aaya</p><div class="meta below">10:06 PM<svg class="ticks"><use href="#ticks"/></svg></div>
      </div>

      <div class="msg in inline tail first"><p>Tera me kal bataunga</p><div class="meta">10:44 PM</div></div>

      <div class="sticker">
        <svg class="thumb" width="110" height="114" viewBox="0 0 110 114" role="img" aria-label="Thumbs up">
          <defs><linearGradient id="skin" x1="0" y1="0" x2="0" y2="1"><stop offset="0" stop-color="#fbc667"/><stop offset=".45" stop-color="#ffd23f"/><stop offset=".8" stop-color="#fdc335"/><stop offset="1" stop-color="#dd8215"/></linearGradient><linearGradient id="cuff" x1="0" y1="0" x2="0" y2="1"><stop offset="0" stop-color="#ffc928"/><stop offset=".6" stop-color="#f0a51f"/><stop offset="1" stop-color="#d97b12"/></linearGradient></defs>
          <path d="M27 52C38 46 46 34 49 22 47 10 49 1 54 0c8 1 15 12 14 22l-2 24 38 2v58c-14 10-56 10-74 0z" fill="url(#skin)"/>
          <path d="M8 51C16 53 24 53 32 50L36 102C28 106 20 104 8 106-2 90-2 66 8 51z" fill="url(#cuff)"/>
          <g shape-rendering="crispEdges">
            <path fill="#10171c" d="M69 27h48v16H69zM109 43h8v24h-8zM109 91h13v20h-13zM101 91h8v20h-8z"/>
            <path fill="#3b2a12" d="M37 27h8v8h-8zM101 43h8v8h-8zM101 59h8v8h-8zM101 83h8v8h-8z"/>
            <path fill="#8d6320" d="M61 27h8v16h-8zM69 43h8v8h-8zM77 43h24v8H77zM93 99h8v12h-8zM101 67h8v8h-8z"/>
            <path fill="#ffd54a" d="M45 27h16v16H45zM37 43h24v16H37z"/>
            <path fill="#f6bd34" d="M37 35h8v8h-8zM37 59h16v16H37zM53 59h8v52h-8z"/>
            <path fill="#ffcf42" d="M37 75h16v36H37z"/>
            <path fill="#e09a25" d="M53 51h8v24h-8zM61 43h8v24h-8zM77 59h24v8H77zM77 75h24v8H77zM77 91h16v8H77z"/>
            <path fill="#d47712" d="M61 67h8v44h-8zM69 51h8v24h-8z"/>
            <path fill="#fbc64a" d="M77 51h24v8H77zM69 75h8v36h-8zM77 67h24v8H77zM77 83h24v8H77zM77 99h16v12H77z"/>
            <path fill="#ffdc6e" d="M85 67h8v8h-8zM45 83h8v8h-8zM37 99h8v8h-8zM77 83h8v8h-8z"/>
          </g>
        </svg>
        <div class="meta pill">10:45 PM<svg class="ticks"><use href="#ticks"/></svg></div>
      </div>

      <div class="day after-sticker">August 4, 2026</div>

      <div class="msg out tail first wide"><p class="wrapped">PESA wapas ayega ki nhi ye bta de Bhai<span class="meta corner">3:02 PM<svg class="ticks"><use href="#ticks"/></svg></span></p></div>
      <div class="msg in inline tail first"><p>Aayengy</p><div class="meta">3:08 PM</div></div>

      <div class="day">Friday</div>

      <div class="msg out tail quoted first wide last">
        <blockquote><cite>+91<svg class="mask"><use href="#mask"/></svg>0161</cite><span>Aayengy</span></blockquote>
        <p>Kb aayega pesa mera 2850 bta</p>
      </div>
      <span class="scrollbar"></span>
      <button class="jump" aria-label="Scroll to latest"><svg width="32" height="36" viewBox="0 0 32 36"><path d="M3 3l13 13L29 3M3 20l13 13 13-13" fill="none" stroke="#9ba1a5" stroke-width="5.500" stroke-linecap="round" stroke-linejoin="round"/></svg></button>
    </section>

    <form class="composer">
      <div class="field">
        <button type="button" class="icon-btn" aria-label="Stickers"><svg width="56" height="56" viewBox="0 0 56 56"><path d="M53 30V20Q53 3 36 3H20Q3 3 3 20v16q0 17 17 17h10zM53 30H42Q31 30 31 41v12" fill="none" stroke="#8d9598" stroke-width="6" stroke-linejoin="round"/><circle cx="19" cy="19" r="4.500" fill="#8d9598"/><circle cx="38" cy="19" r="4.500" fill="#8d9598"/><path d="M16 32h18v9q-14 2-18-9z" fill="#8d9598"/></svg></button>
        <span class="caret"></span>
        <input type="text" placeholder="Message" aria-label="Message">
        <button type="button" class="icon-btn" aria-label="Attach"><svg width="56" height="56" viewBox="0 0 56 56"><path d="M43 13v27a14 14 0 0 1-29 0V13a10 10 0 0 1 20 0v25a5 5 0 0 1-10 0V13" fill="none" stroke="#8d9598" stroke-width="5" stroke-linecap="round"/></svg></button>
        <button type="button" class="icon-btn" aria-label="Payment"><svg width="56" height="56" viewBox="0 0 56 56" fill="none" stroke="#8d9598"><circle cx="28" cy="28" r="25" stroke-width="5.500"/><path d="M19 17h19M19 25h19M20 17h5q8 1 8 8t-8 8h-4l11 10" stroke-width="4"/></svg></button>
        <button type="button" class="icon-btn" aria-label="Camera"><svg width="56" height="52" viewBox="0 0 56 52" fill="none" stroke="#8d9598" stroke-width="5.500" stroke-linejoin="round"><path d="M3 9h14l6-6h12l5 6h13v40H3z"/><circle cx="28" cy="28" r="10"/></svg></button>
      </div>
      <button type="button" class="mic" aria-label="Record voice message"><svg width="40" height="54" viewBox="0 0 40 54"><rect x="12" y="0" width="17" height="34" rx="8.500" fill="#0b1014"/><path d="M3 28q2 15 17 15t17-15M20 43v9" fill="none" stroke="#0b1014" stroke-width="5" stroke-linecap="round"/></svg></button>
    </form>
  </main>
  <div class="navbar"><span></span></div>
</div>
</body>
</html>
```
FILE: styles.css
```
* { box-sizing: border-box; margin: 0; padding: 0; }

body {
  background: #0b1014;
  color: #f7f8fa;
  font: 400 50px/60px Inter, Roboto, sans-serif;
}

button { border: 0; background: none; color: inherit; font: inherit; }
svg { display: block; flex: none; }
.defs { position: absolute; width: 0; height: 0; }

.phone { display: flex; flex-direction: column; height: 100vh; }

/* Status bar */
.status {
  display: grid;
  grid-template-columns: 1fr 411px 1fr;
  align-items: center;
  flex: none;
  height: 110px;
  padding-top: 13px;
}
.status-left { display: flex; align-items: center; gap: 17px; padding-left: 55px; font: 500 34px/40px Inter, sans-serif; }
.island {
  display: flex;
  align-items: center;
  justify-content: space-between;
  height: 97px;
  padding: 0 27px 0 28px;
  border: 2px solid #28292a;
  border-radius: 49px;
  background: #000;
  font: 600 34px/40px "Noto Sans", sans-serif;
}
.island-count { font: 700 18px "Noto Sans", sans-serif; fill: #4795ff; }
.status-right { display: flex; align-items: center; padding-left: 19px; }
.vonr { margin-left: 11px; width: 24px; font: 700 16px/19px "Noto Sans", sans-serif; }
.rate { margin: 0 13px 0 16px; width: 41px; text-align: center; font: 500 20px/20px Roboto, sans-serif; }
.rate small { display: block; font-size: 18px; line-height: 18px; }
.status-right svg + svg { margin-left: 7px; }
.net { font: 800 16px "Noto Sans", sans-serif; fill: #fff; }

/* Conversation header */
.bar {
  display: flex;
  align-items: center;
  flex: none;
  height: 138px;
  padding: 0 56px 14px 44px;
  border-bottom: 2px solid #171c20;
}
.icon-btn { display: flex; align-items: center; justify-content: center; flex: none; }
.avatar {
  display: grid;
  place-items: center;
  flex: none;
  width: 99px;
  height: 99px;
  margin: 0 33px 0 55px;
  border-radius: 50%;
  background: #321622;
  color: #fa99ac;
  font-size: 48px;
}
.who { flex: 1; min-width: 0; }
.who h1 { display: flex; align-items: baseline; font-size: 53px; font-weight: 400; line-height: 66px; }
.who h1 svg { margin: 0 -3px 0 15px; }
.who p { padding-top: 2px; font-size: 34px; line-height: 44px; }
.call { gap: 32px; margin-right: 57px; }

/* Messages */
.chat { position: relative; display: flex; flex-direction: column; flex: 1; min-height: 0; overflow: hidden; }
.wallpaper {
  position: absolute;
  inset: 0;
  width: 100%;
  height: 100%;
  fill: none;
  stroke: #23292d;
  stroke-width: 3;
  stroke-linecap: round;
  stroke-linejoin: round;
}
.list {
  position: relative;
  display: flex;
  flex-direction: column;
  flex: 1;
  min-height: 0;
  overflow: hidden;
  padding: 0 47px;
}
.msg {
  position: relative;
  display: flex;
  flex-direction: column;
  flex: none;
  max-width: 89%;
  padding: 18px 25px 7px 27px;
  border-radius: 32px;
}
.in { align-self: flex-start; background: #1f262a; }
.out { align-self: flex-end; padding: 18px 24px 9px 27px; background: #144d37; }
.in p { padding-right: 10px; }
.out p { padding-right: 11px; }
.msg.inline { flex-direction: row; align-items: flex-end; padding-bottom: 8px; }
.msg.inline p { padding-right: 39px; margin-bottom: 14px; }
.first { margin-top: 29px; }
.next { margin-top: 7px; }
.wide { width: 89%; }
.scrolled { width: 89%; height: 80px; margin-top: -77px; }

.tail::before {
  content: "";
  position: absolute;
  top: 0;
  width: 20px;
  height: 26px;
  background: inherit;
}
.in.tail { border-top-left-radius: 0; }
.out.tail { border-top-right-radius: 0; }
.in.tail::before { left: -19px; clip-path: path("M5 0H20V26H19L1 7Q-2 0 5 0Z"); }
.out.tail::before { right: -19px; clip-path: path("M15 0H0V26H1L19 7Q22 0 15 0Z"); }

.meta {
  display: flex;
  align-items: center;
  align-self: flex-end;
  gap: 13px;
  color: #a2a6a8;
  font-size: 37px;
  line-height: 44px;
  white-space: nowrap;
}
.out .meta, .pill { color: #9ab5a9; }
.below { margin-top: 21px; }
.wrapped { display: flow-root; }
.corner { float: right; margin: 27px -11px 0 0; }
.ticks { width: 43px; height: 28px; }

.msg.quoted { padding-top: 11px; }
.quoted blockquote {
  display: flex;
  flex-direction: column;
  margin: 0 -14px 20px -17px;
  padding: 15px 30px 7px 34px;
  border-radius: 24px;
  background: linear-gradient(90deg, #a78fff 11px, #154333 11px);
  color: #9bb0a7;
  font-size: 44px;
}
.quoted cite { display: flex; align-items: baseline; color: #d6cfff; font-size: 43px; font-style: normal; }
.mask { width: 164px; height: 35px; margin: 0 -2px 0 11px; }
.msg.last { padding-bottom: 90px; }

.sticker { display: flex; flex-direction: column; align-items: flex-end; margin: 42px 5px 0 0; }
.thumb { overflow: visible; }
.pill { margin-top: 19px; padding: 17px 21px 13px; border-radius: 37px; background: #144d37; }

.day {
  align-self: center;
  margin-top: 29px;
  padding: 17px 25px 14px;
  border-radius: 24px;
  background: #11171b;
  color: #8f9598;
  font-size: 38px;
  line-height: 47px;
}
.after-sticker { margin-top: 24px; }
.day + .first { margin-top: 30px; }

.scrollbar { position: absolute; top: 66.600%; right: 0; width: 11px; height: 19.500%; background: #45494c; }
.jump {
  position: absolute;
  right: 34px;
  bottom: 44px;
  display: grid;
  place-items: center;
  width: 88px;
  height: 88px;
  border-radius: 50%;
  background: #28323a;
  box-shadow: 0 3px 8px rgba(0, 0, 0, .4);
}

/* Composer */
.composer { position: relative; display: flex; align-items: flex-end; gap: 13px; flex: none; padding: 7px 15px 14px 13px; }
.field {
  display: flex;
  align-items: center;
  flex: 1;
  min-width: 0;
  height: 129px;
  padding: 0 36px;
  border-radius: 65px;
  background: #1f262a;
}
.caret { flex: none; width: 6px; height: 76px; margin-left: 38px; background: #3086fb; }
.field input {
  flex: 1;
  min-width: 0;
  height: 76px;
  padding-top: 4px;
  margin-left: -5px;
  border: 0;
  outline: 0;
  background: none;
  color: #f7f8fa;
  font: 400 56px/72px Inter, Roboto, sans-serif;
}
.field input::placeholder { color: #8d9598; opacity: 1; }
.field .icon-btn + .icon-btn { margin-left: 77px; }
.mic { display: grid; place-items: center; flex: none; width: 132px; height: 132px; border-radius: 50%; background: #22c162; }

.navbar { display: flex; justify-content: center; flex: none; height: 49px; padding-top: 18px; }
.navbar span { width: 37%; height: 12px; border-radius: 6px; background: #56595c; }
```
